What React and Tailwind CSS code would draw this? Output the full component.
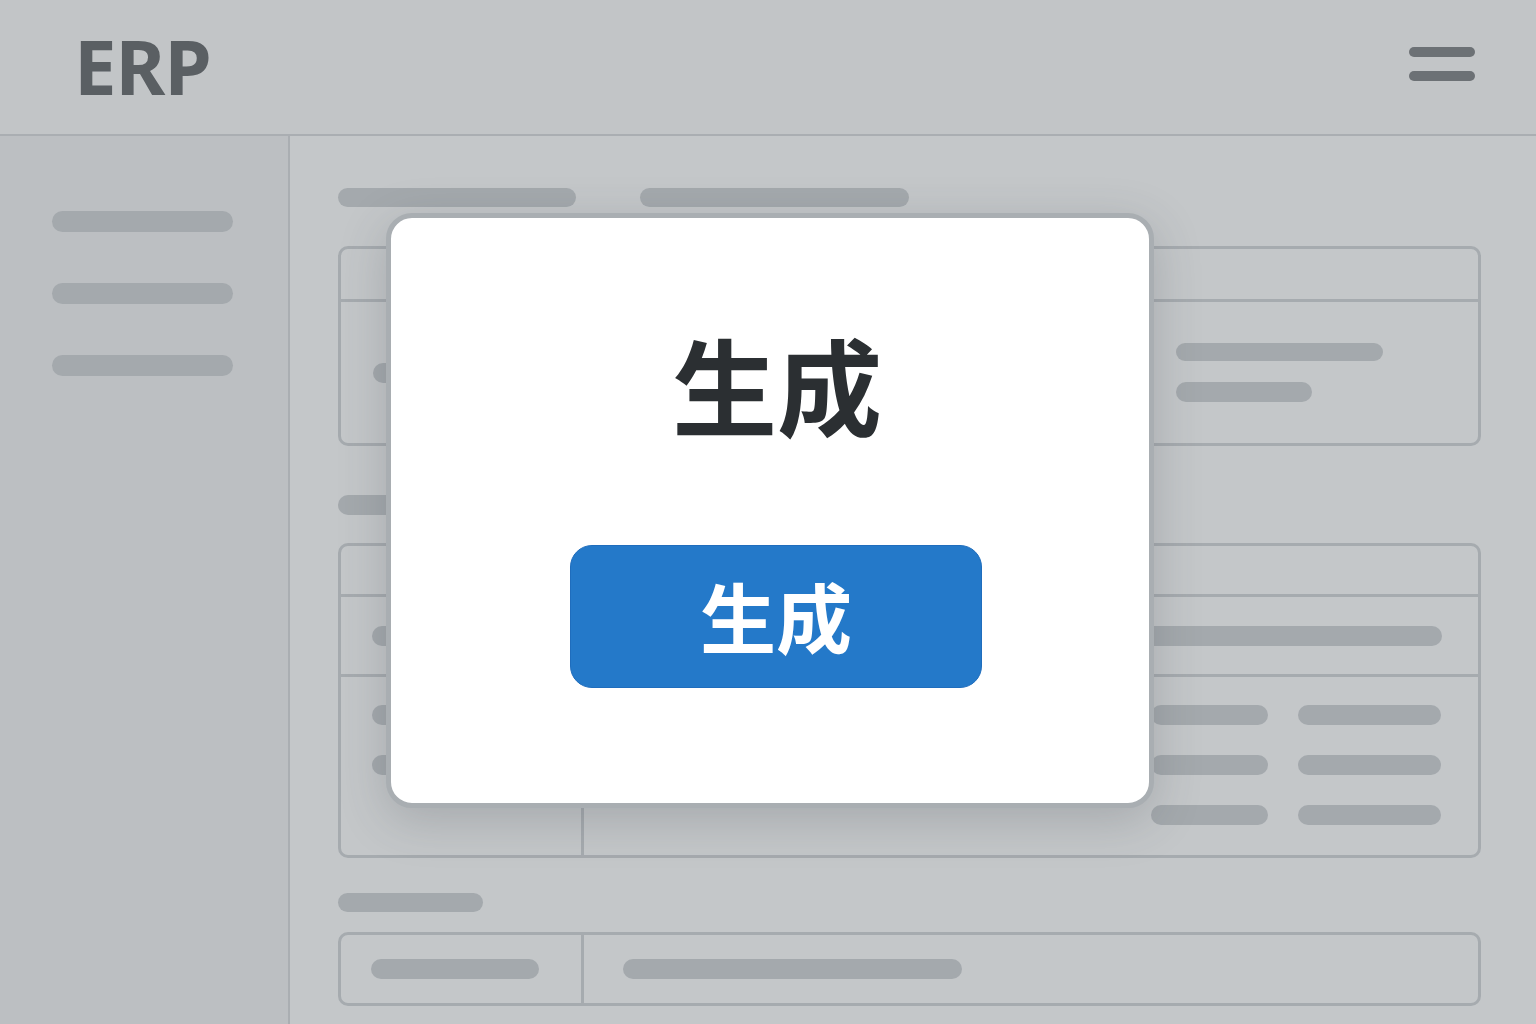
import React from "react";

const bar = "rounded-full bg-[#a4a9ad]";

function Bar({ className }) {
    return <div className={`${bar} ${className}`} />;
}

/**
 * ERP screen dimmed behind a "生成" dialog
 */
export default function App() {
    return (
        <div className="relative w-[1536px] h-[1024px] overflow-hidden bg-[#c4c7c9] font-['Noto_Sans','Noto_Sans_CJK_SC',sans-serif]">
            {/* header */}
            <header className="h-[136px] flex items-center justify-between pl-[74px] pr-[61px] border-b-2 border-[#aaaeb2] bg-[#c2c5c7]">
                <span className="text-[76px] font-bold leading-none tracking-[-1px] text-[#5a5f63] pb-[2px]">ERP</span>
                <div className="flex flex-col gap-[14px] pb-[6px]">
                    <div className="w-[66px] h-[10px] rounded-full bg-[#6c7175]" />
                    <div className="w-[66px] h-[10px] rounded-full bg-[#6c7175]" />
                </div>
            </header>

            <div className="flex h-[888px]">
                {/* sidebar */}
                <aside className="w-[290px] shrink-0 border-r-2 border-[#aaaeb2] bg-[#bcbfc2] pt-[75px] pl-[52px] flex flex-col gap-[51px]">
                    <Bar className="w-[181px] h-[21px]" />
                    <Bar className="w-[181px] h-[21px]" />
                    <Bar className="w-[181px] h-[21px]" />
                </aside>

                {/* main */}
                <main className="flex-1 pl-[48px] pr-[55px] pt-[52px]">
                    <div className="flex gap-[64px]">
                        <Bar className="w-[238px] h-[19px]" />
                        <Bar className="w-[269px] h-[19px]" />
                    </div>

                    <section className="mt-[39px] h-[200px] border-[3px] border-[#a6abaf] rounded-[10px] flex flex-col">
                        <div className="h-[53px] border-b-[3px] border-[#a6abaf]" />
                        <div className="flex-1 flex items-center">
                            <div className="pl-[32px] flex-1">
                                <Bar className="w-[160px] h-[20px]" />
                            </div>
                            <div className="w-[302px] flex flex-col gap-[21px]">
                                <Bar className="w-[207px] h-[18px]" />
                                <Bar className="w-[136px] h-[20px]" />
                            </div>
                        </div>
                    </section>

                    <Bar className="mt-[49px] w-[150px] h-[20px]" />

                    <section className="mt-[28px] h-[315px] border-[3px] border-[#a6abaf] rounded-[10px] flex flex-col">
                        <div className="h-[51px] border-b-[3px] border-[#a6abaf]" />
                        <div className="h-[80px] border-b-[3px] border-[#a6abaf] flex items-center pl-[31px]">
                            <Bar className="w-[1070px] h-[20px]" />
                        </div>
                        <div className="flex-1 flex">
                            <div className="w-[243px] border-r-[3px] border-[#a6abaf] pl-[31px] pt-[28px] flex flex-col gap-[30px]">
                                <Bar className="w-[160px] h-[20px]" />
                                <Bar className="w-[160px] h-[20px]" />
                            </div>
                            <div className="flex-1 pt-[28px] pl-[567px] flex flex-col gap-[30px]">
                                {[0, 1, 2].map((i) => (
                                    <div key={i} className="flex gap-[30px]">
                                        <Bar className="w-[117px] h-[20px]" />
                                        <Bar className="w-[143px] h-[20px]" />
                                    </div>
                                ))}
                            </div>
                        </div>
                    </section>

                    <Bar className="mt-[35px] w-[145px] h-[19px]" />

                    <section className="mt-[20px] h-[74px] border-[3px] border-[#a6abaf] rounded-[10px] flex">
                        <div className="w-[243px] border-r-[3px] border-[#a6abaf] flex items-center pl-[30px]">
                            <Bar className="w-[168px] h-[20px]" />
                        </div>
                        <div className="flex-1 flex items-center pl-[39px]">
                            <Bar className="w-[339px] h-[20px]" />
                        </div>
                    </section>
                </main>
            </div>

            {/* dialog */}
            <div className="absolute left-[386px] top-[213px] w-[768px] h-[595px] rounded-[26px] border-[5px] border-[#a9aeb2] bg-white shadow-[0_12px_48px_rgba(60,66,72,0.22)] flex flex-col items-center pt-[112px] pl-[14px]">
                <h1 className="text-[105px] font-semibold leading-none text-[#2b2f32] font-['Noto_Sans_CJK_SC',sans-serif]">
                    生成
                </h1>
                <button className="mt-[110px] w-[412px] h-[143px] rounded-[22px] bg-[#2479c9] border border-[#1f6dbd] text-white text-[76px] font-bold leading-none font-['Noto_Sans_CJK_SC',sans-serif] mr-[2px] pb-[4px]">
                    生成
                </button>
            </div>
        </div>
    );
}
